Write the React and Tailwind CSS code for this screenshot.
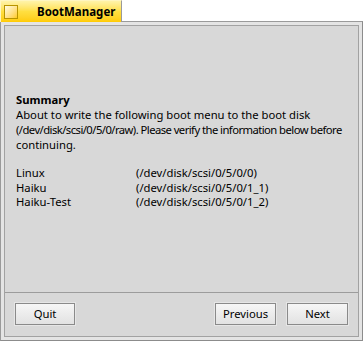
import React from "react";

function Btn({ children, w }) {
  return (
    <div className="p-px bg-[#e6e6e6]">
      <div
        className={`${w} h-[22px] border border-[#8a8a8a] bg-gradient-to-b from-[#f6f6f6] to-[#e2e2e2] flex items-center justify-center text-[11.25px] text-black`}
      >
        {children}
      </div>
    </div>
  );
}

export default function App() {
  return (
    <div
      className="w-[363px] h-[341px] bg-white flex flex-col overflow-hidden"
      style={{ fontFamily: '"Noto Sans", "DejaVu Sans", sans-serif' }}
    >
      {/* Tab */}
      <div className="w-[122px] h-[22px] flex shrink-0 relative z-10 -mb-px">
        <div className="flex-1 flex items-center bg-gradient-to-b from-[#fff3a8] via-[#ffdf40] to-[#ffcb00] border-t border-l border-[#fff6c0] border-r border-r-[#9a9a9a]">
          <div className="ml-[3px] w-[14px] h-[14px] border border-[#b89400] bg-gradient-to-br from-[#fffbe0] to-[#ffcb00]" />
          <div className="ml-[19px] font-bold text-[11.5px] text-black whitespace-nowrap">
            BootManager
          </div>
        </div>
      </div>
      {/* Window frame */}
      <div className="flex-1 border border-[#9a9a9a] border-r-[#8c8c8c] border-b-[#8c8c8c] bg-[#e4e4e4] p-[3px] flex flex-col">
        <div className="flex-1 border border-[#a2a2a2] bg-[#d8d8d8] flex flex-col min-w-0">
          <div className="flex-1 pl-[11px] pt-[66px] text-[11.25px] leading-[15px] text-black">
            <div className="font-bold">Summary</div>
            <div className="whitespace-nowrap">About to write the following boot menu to the boot disk</div>
            <div className="whitespace-nowrap tracking-[-0.55px]">
              (/dev/disk/scsi/0/5/0/raw). Please verify the information below before
            </div>
            <div className="whitespace-nowrap">continuing.</div>
            <div className="mt-[14px] grid grid-cols-[120px_1fr] leading-[14.5px]">
              <div>Linux</div>
              <div>(/dev/disk/scsi/0/5/0/0)</div>
              <div>Haiku</div>
              <div>(/dev/disk/scsi/0/5/0/1_1)</div>
              <div>Haiku-Test</div>
              <div>(/dev/disk/scsi/0/5/0/1_2)</div>
            </div>
          </div>
          <div className="h-px bg-[#9c9c9c]" />
          <div className="h-[43px] flex items-start pt-[9px] pl-[9px] pr-[9px]">
            <Btn w="w-[60px]">Quit</Btn>
            <div className="flex-1" />
            <Btn w="w-[61px]">Previous</Btn>
            <div className="w-[9px]" />
            <Btn w="w-[61px]">Next</Btn>
          </div>
        </div>
      </div>
    </div>
  );
}
